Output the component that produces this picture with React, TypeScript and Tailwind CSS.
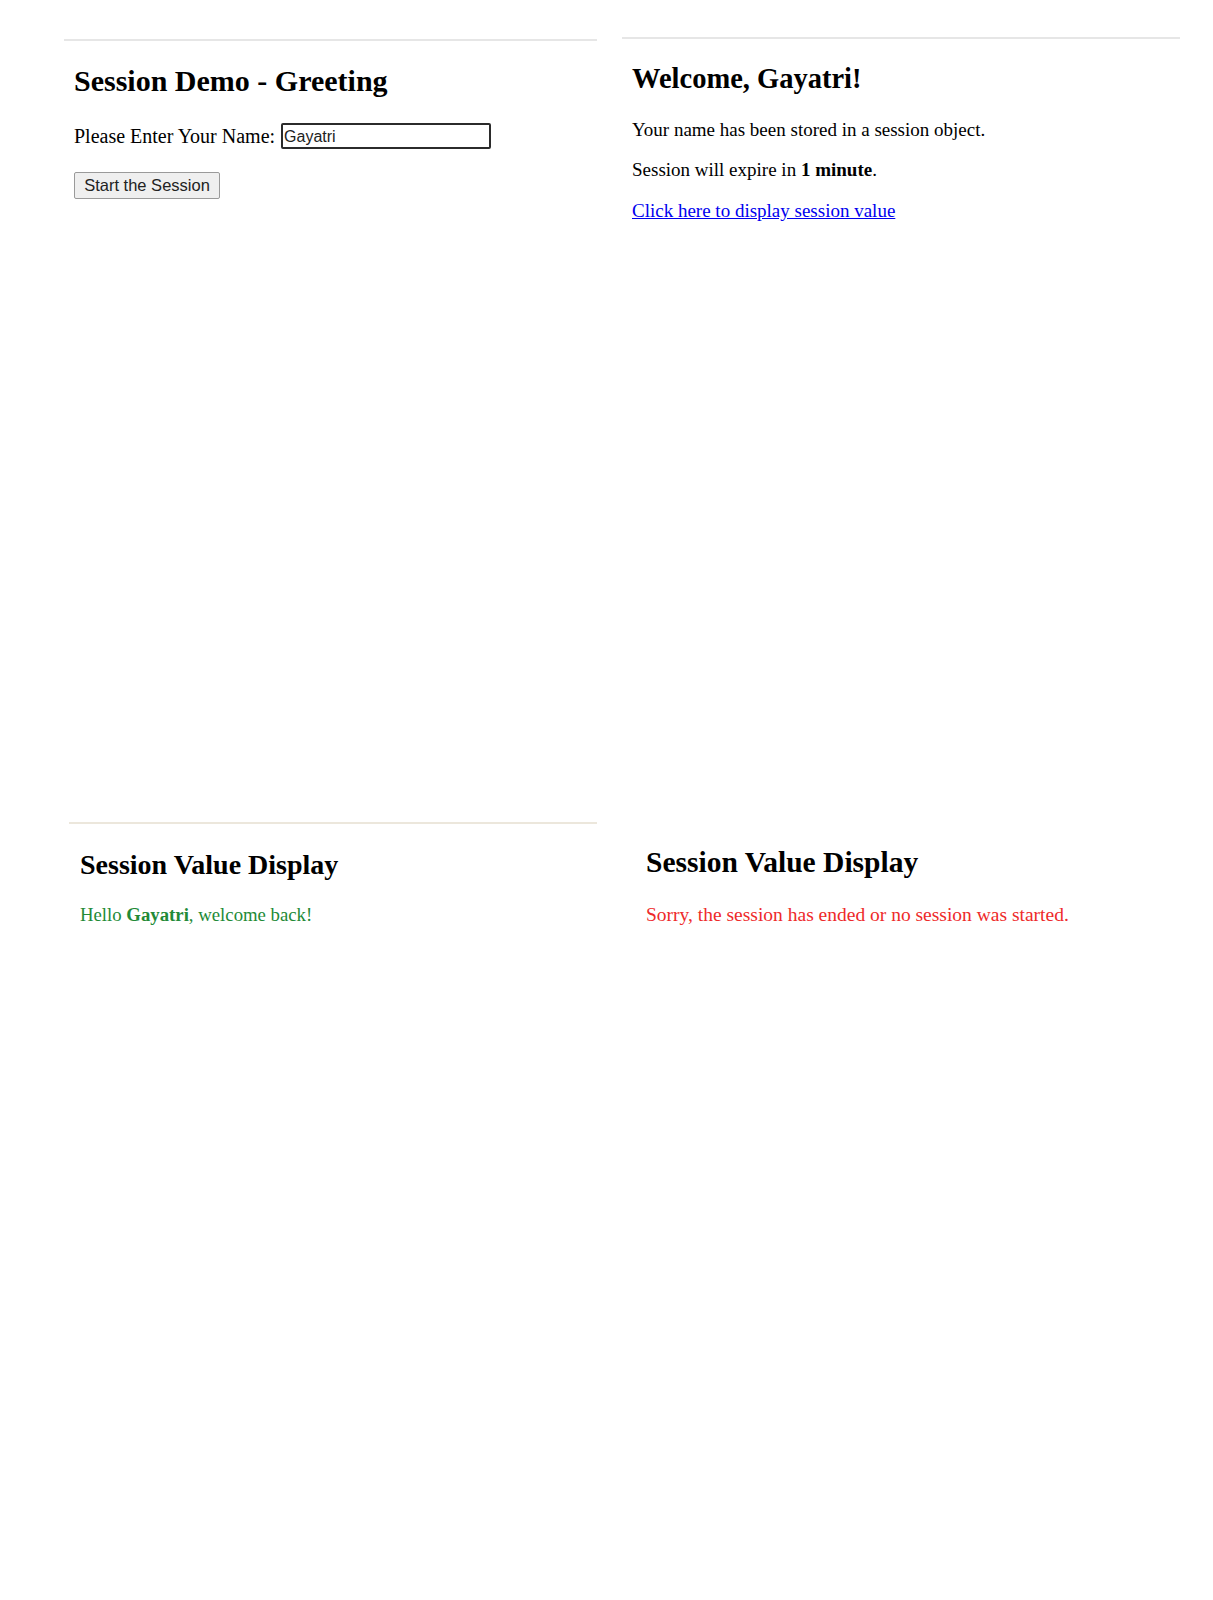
import React from "react";

const serif = "font-['Liberation_Serif','Times_New_Roman',serif]";
const sans = "font-['Liberation_Sans',Arial,sans-serif]";

export default function App() {
  return (
    <div className={`w-[1213px] h-[1600px] bg-white text-black ${serif}`}>
      {/* Top row */}
      <div className="flex h-[783px]">
        {/* Left: greeting form */}
        <div className="ml-[64px] mt-[39px] w-[533px] self-start border-t-2 border-[#e6e6e6] pl-[10px]">
          <h2 className="mt-[23px] text-[30px] leading-[34px] font-bold">Session Demo - Greeting</h2>
          <div className="mt-[25px] flex items-center h-[26px] text-[20px] leading-[23px]">
            <span>Please Enter Your Name:</span>
            <div className={`ml-[6px] w-[210px] h-[26px] border-2 border-[#2b2b2b] rounded-[2px] flex items-center pl-[1px] text-[16px] text-[#222] ${sans}`}>
              Gayatri
            </div>
          </div>
          <button
            className={`mt-[23px] w-[146px] h-[27px] bg-[#efefef] border border-[#9a9a9a] rounded-[2px] text-[16.5px] text-[#222] flex items-center justify-center ${sans}`}
          >
            Start the Session
          </button>
        </div>

        {/* Right: welcome */}
        <div className="ml-[25px] mt-[37px] w-[558px] self-start border-t-2 border-[#e6e6e6] pl-[10px]">
          <h2 className="mt-[23px] text-[28.5px] leading-[33px] font-bold">Welcome, Gayatri!</h2>
          <p className="mt-[24px] text-[19px] leading-[22px]">Your name has been stored in a session object.</p>
          <p className="mt-[18px] text-[19px] leading-[22px]">
            Session will expire in <b>1 minute</b>.
          </p>
          <p className="mt-[19px] text-[19px] leading-[22px]">
            <a href="#" className="text-[#0000ee] underline">Click here to display session value</a>
          </p>
        </div>
      </div>

      {/* Bottom row */}
      <div className="flex">
        <div className="ml-[69px] mt-[39px] w-[528px] self-start border-t-2 border-[#ece7dc] pl-[11px]">
          <h2 className="mt-[24px] text-[28px] leading-[33px] font-bold">Session Value Display</h2>
          <p className="mt-[23px] text-[18.75px] leading-[22px] text-[#228a36]">
            Hello <b>Gayatri</b>, welcome back!
          </p>
        </div>
        <div className="ml-[49px] mt-[39px] w-[560px] self-start pt-[2px]">
          <h2 className="mt-[22px] text-[29.5px] leading-[33px] font-bold">Session Value Display</h2>
          <p className="mt-[25px] text-[19.5px] leading-[22px] text-[#ee2a2a]">
            Sorry, the session has ended or no session was started.
          </p>
        </div>
      </div>
    </div>
  );
}
